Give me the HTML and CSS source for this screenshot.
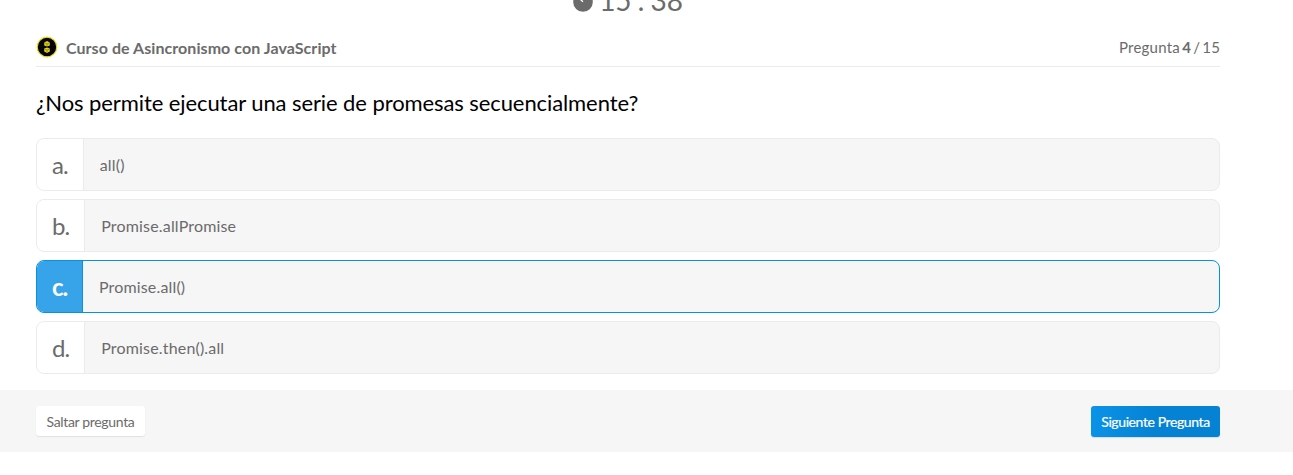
FILE: index.html
```html
<!DOCTYPE html>
<html lang="es">
<head>
<meta charset="utf-8">
<title>Curso de Asincronismo con JavaScript</title>
<link rel="stylesheet" href="styles.css">
</head>
<body>
<main class="exam">
  <div class="timer">
    <svg class="timer-icon" viewBox="0 0 20 20"><circle cx="10" cy="10" r="9.800"/><path d="M7.500 7.500l2.500 2.300"/></svg>
    <span class="timer-text">15 : 38</span>
  </div>
  <header class="exam-header">
    <div class="course">
      <svg class="badge" viewBox="0 0 22 22"><circle class="badge-bg" cx="11" cy="11" r="9.800"/><path class="badge-dot" d="M11 5l2.800 1.500v3L11 10.500 8.200 9.500v-3zM11 11.500l2.800 1v3L11 17l-2.800-1.500v-3z"/><path class="badge-line" d="M8.500 6.800l2.500 1.200 2.500-1.200M8.500 13l2.500 1.200 2.500-1.200M11 8v2M11 14.200v2"/></svg>
      <h1 class="course-name">Curso de Asincronismo con JavaScript</h1>
    </div>
    <p class="progress">Pregunta <b>4</b> / 15</p>
  </header>
  <h2 class="question">¿Nos permite ejecutar una serie de promesas secuencialmente?</h2>
  <div class="options">
    <div class="option"><span class="letter">a.</span><span class="answer">all()</span></div>
    <div class="option"><span class="letter">b.</span><span class="answer">Promise.allPromise</span></div>
    <div class="option selected"><span class="letter">c.</span><span class="answer">Promise.all()</span></div>
    <div class="option"><span class="letter">d.</span><span class="answer">Promise.then().all</span></div>
  </div>
</main>
<footer class="actions">
  <button class="button skip">Saltar pregunta</button>
  <button class="button next">Siguiente Pregunta</button>
</footer>
</body>
</html>
```
FILE: styles.css
```css
* { box-sizing: border-box; }
body { margin: 0; background: #fff; color: #6b6b6b; font-family: Lato, sans-serif; overflow: hidden; }
.exam { width: 1184px; margin-left: 36px; height: 390px; }
.timer { display: flex; justify-content: center; gap: 6px; height: 28px; }
.timer-icon { width: 20px; height: 20px; margin-top: -8px; fill: #6b6b6b; stroke: none; }
.timer-icon path { fill: none; stroke: #fff; stroke-width: 1.300; }
.timer-text { font-size: 28px; line-height: 36px; margin-top: -18px; word-spacing: -1px; letter-spacing: -0.100px; }
.exam-header { display: flex; justify-content: space-between; align-items: center; height: 39px; border-bottom: 1px solid #ebebeb; }
.course { display: flex; align-items: center; gap: 8px; }
.badge { width: 22px; height: 22px; }
.badge-bg { fill: #050505; stroke: #e8dc1c; stroke-width: 1.200; }
.badge-dot { fill: #e0cf1a; }
.badge-line { fill: none; stroke: #6d6410; stroke-width: 0.600; }
.course-name { margin: 0; padding-top: 1px; font-size: 16px; line-height: 21px; font-weight: 700; letter-spacing: 0.060px; }
.progress { margin: 0; font-size: 15px; line-height: 20px; letter-spacing: 0.220px; word-spacing: -1.900px; margin-right: -0.220px; }
.question { margin: 0; padding-top: 22px; height: 71px; color: #000; font-size: 22px; line-height: 28px; font-weight: 400; letter-spacing: -0.090px; }
.options { display: grid; gap: 8px; }
.option { display: flex; height: 53px; border: 1px solid #ebebeb; border-radius: 8px; background: #f6f6f6; overflow: hidden; }
.letter { display: flex; align-items: center; padding: 0 15px 1px; background: #fff; border-right: 1px solid #ebebeb; font-size: 24px; letter-spacing: -0.950px; }
.answer { padding: 16px; font-size: 16px; line-height: 20px; letter-spacing: 0.170px; }
.selected { border-color: #0791e6; }
.selected .letter { padding-right: 14.500px; background: #37a4e9; color: #fff; border-color: #0791e6; font-weight: 700; }
.actions { display: flex; justify-content: space-between; align-items: flex-start; height: 62px; padding: 16px 73px 0 36px; background: #f6f6f6; }
.button { height: 31px; padding: 0; border: 0; border-radius: 3px; font: 14px/20px Lato, sans-serif; letter-spacing: -0.330px; white-space: nowrap; }
.skip { width: 109px; height: 30px; padding-top: 1px; background: #fff; color: #6b6b6b; box-shadow: 0 1px 1px #e2e2e2; }
.next { width: 129px; background: linear-gradient(100deg, #0a93e8, #0582d4 50%, #0582d4); color: #fff; letter-spacing: -0.400px; -webkit-text-stroke: 0.200px #fff; box-shadow: 0 1px 1px #d5dfe7; }
```
